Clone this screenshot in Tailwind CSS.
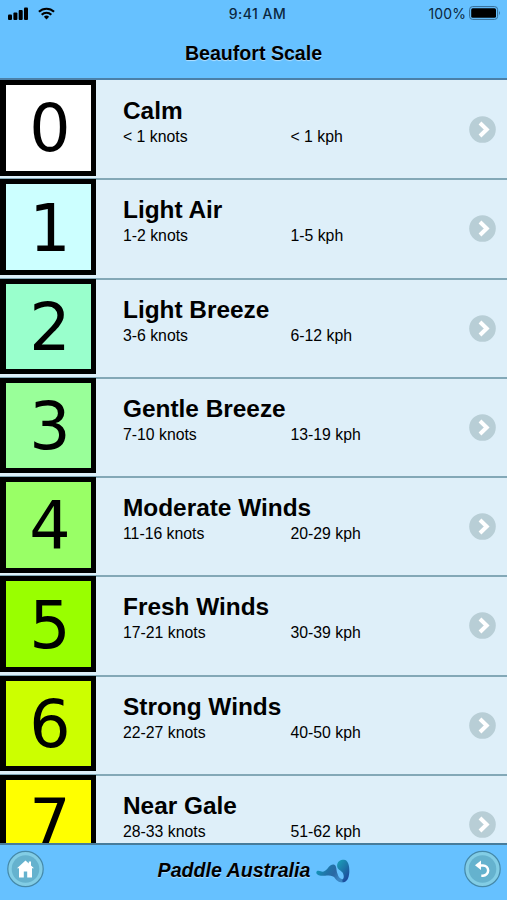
<!DOCTYPE html>
<html lang="en">
<head>
  <meta charset="UTF-8">
  <meta name="viewport" content="width=device-width, initial-scale=1.0">
  <title>Beaufort Scale</title>
  <script src="https://cdn.jsdelivr.net/npm/@tailwindcss/browser@4"></script>
</head>
<body class="bg-[#66c1ff] font-['Liberation_Sans',Arial,sans-serif] text-black">
  <div class="flex h-[900px] w-[507px] flex-col overflow-hidden">
    <header class="h-20 shrink-0 border-b-2 border-[#4b80a8]">
      <!-- Status bar -->
      <div class="grid h-[27px] grid-cols-3 items-center pr-[6px] pl-2 font-[Inter,sans-serif] text-[14px]">
        <div class="flex items-center gap-[10px]">
          <svg class="h-[13px] w-5" viewBox="0 0 20 13">
            <rect x="0" y="7.5" width="4" height="5.5" rx="1"/>
            <rect x="5.4" y="5.5" width="4" height="7.5" rx="1"/>
            <rect x="10.7" y="3" width="4" height="10" rx="1"/>
            <rect x="16" y="0.5" width="4" height="12.5" rx="1"/>
          </svg>
          <svg class="-mt-px h-[13px] w-[17px]" viewBox="0 0 18 13" fill="none" stroke="#000" stroke-width="2.3">
            <path d="M1 4.7a11.5 11.5 0 0 1 16 0"/>
            <path d="M3.9 7.8a7.3 7.3 0 0 1 10.2 0"/>
            <path d="M9 12.8 6.2 10a4 4 0 0 1 5.6 0Z" fill="#000" stroke="none"/>
          </svg>
        </div>
        <div class="pl-[6px] text-center text-[14px] font-medium tracking-[0.5px] whitespace-nowrap text-[#0b2740]">9:41 AM</div>
        <div class="flex items-center justify-end gap-[3px] text-[#0b2740]">
          <span class="tracking-[0.1px]">100%</span>
          <svg class="-mt-px h-[14px] w-8" viewBox="0 0 32 14">
            <rect x="0.6" y="0.6" width="28" height="12.8" rx="3" fill="none" stroke="#356c94" stroke-width="1"/>
            <rect x="2.2" y="2.2" width="24.8" height="9.6" rx="1.5" fill="#000"/>
            <path d="M30 4.8q1.8 2.2 0 4.4z" fill="#356c94"/>
          </svg>
        </div>
      </div>
      <h1 class="pt-[11px] text-center text-[19.6px] leading-[30px] font-bold [text-shadow:0_1px_1px_#ffffff80]">Beaufort Scale</h1>
    </header>

    <main id="scale" class="min-h-0 flex-1 overflow-hidden bg-[#deeff9]"></main>

    <footer class="flex h-[57px] shrink-0 items-start justify-between border-t-2 border-[#477c9b] pt-[5px] pr-[6px] pl-[7px]">
      <svg class="h-[38px] w-[38px]" viewBox="0 0 38 38">
        <circle cx="18.5" cy="19" r="17.7" fill="#82cde5" stroke="#4589a9" stroke-width="1.2"/>
        <circle cx="18.5" cy="19" r="13.8" fill="#65b2ce"/>
        <path d="M18.5 10.5 10 18.3h2v9.2h4.8v-6h3.4v6H25v-9.2h2l-3-2.8v-4h-2.2v2Z" fill="#fff"/>
      </svg>
      <div class="flex items-center pt-[7px]">
        <span class="text-[19.6px] leading-[26px] font-bold italic [text-shadow:0_1px_1px_#ffffff80]">Paddle Australia</span>
        <svg class="mt-[2px] ml-[6px] h-[24px] w-[34px]" viewBox="20 24 100 76" preserveAspectRatio="none">
          <defs>
            <linearGradient id="crest" x1="0" y1="0" x2="1" y2="0.4">
              <stop offset="0" stop-color="#0fa0bd"/>
              <stop offset="0.5" stop-color="#2173a8"/>
              <stop offset="0.75" stop-color="#2a68a4"/>
              <stop offset="1" stop-color="#3a86c4"/>
            </linearGradient>
            <linearGradient id="curl" x1="0" y1="0" x2="0.7" y2="1">
              <stop offset="0" stop-color="#1aa3ba"/>
              <stop offset="0.5" stop-color="#1c78aa"/>
              <stop offset="1" stop-color="#1c469b"/>
            </linearGradient>
          </defs>
          <path fill="url(#crest)" d="M21 68C20 61 27 60 34 63C41 66 48 62 54 54C60 45 67 40 74 42C81 45 79 58 83 70C86 82 91 87 99 88L99 98C86 99 79 91 73 81C67 76 60 76 52 76C40 79 23 77 21 68Z"/>
          <path fill="url(#curl)" d="M82 46C82 32 91 26 102 26C114 27 119 43 118 65C117 86 110 98 98 98L97 90C103 86 103 76 98 67C92 58 83 58 82 46Z"/>
        </svg>
      </div>
      <svg class="h-[38px] w-[38px]" viewBox="0 0 38 38">
        <circle cx="19.5" cy="19" r="17.7" fill="#82cde5" stroke="#4589a9" stroke-width="1.2"/>
        <circle cx="19.5" cy="19" r="13.8" fill="#65b2ce"/>
        <path d="M16 15.4h4a5.1 5.1 0 0 1 0 10.3h-1.7" fill="none" stroke="#fff" stroke-width="2.5"/>
        <path d="M18 10.5v9.5l-6-4.7Z" fill="#fff"/>
      </svg>
    </footer>
  </div>

  <script>
    const winds = [
      { force: 0, name: "Calm", knots: "&lt; 1 knots", kph: "&lt; 1 kph", color: "#ffffff" },
      { force: 1, name: "Light Air", knots: "1-2 knots", kph: "1-5 kph", color: "#ccffff" },
      { force: 2, name: "Light Breeze", knots: "3-6 knots", kph: "6-12 kph", color: "#99ffcc" },
      { force: 3, name: "Gentle Breeze", knots: "7-10 knots", kph: "13-19 kph", color: "#99ff99" },
      { force: 4, name: "Moderate Winds", knots: "11-16 knots", kph: "20-29 kph", color: "#99ff66" },
      { force: 5, name: "Fresh Winds", knots: "17-21 knots", kph: "30-39 kph", color: "#99ff00" },
      { force: 6, name: "Strong Winds", knots: "22-27 knots", kph: "40-50 kph", color: "#ccff00" },
      { force: 7, name: "Near Gale", knots: "28-33 knots", kph: "51-62 kph", color: "#ffff00" }
    ];

    // rows overlap by 1px so each badge covers the divider above it
    document.getElementById("scale").innerHTML = winds.map(w => `
      <div class="relative -mb-px flex h-[100.3px] items-start border-b-2 border-[#83a8b7]">
        <div class="flex h-[95.5px] w-24 shrink-0 items-center justify-center border-[5px] border-l-[6px] border-black font-['DejaVu_Sans',Verdana,sans-serif] text-[65px] leading-none" style="background:${w.color}">
          <span class="relative top-px left-[1.5px]">${w.force}</span>
        </div>
        <div class="flex-1 pt-4 pl-[27px]">
          <h2 class="text-[24.4px] leading-[29px] font-bold">${w.name}</h2>
          <div class="flex pt-px text-[15.8px] leading-[22px]">
            <span class="w-[167.5px]">${w.knots}</span>
            <span>${w.kph}</span>
          </div>
        </div>
        <svg class="mt-9 mr-[11px] h-[27px] w-[27px] shrink-0" viewBox="0 0 27 27">
          <circle cx="13.5" cy="13.5" r="13.3" fill="#b8ced6"/>
          <path d="m11 7 6.7 6.5-6.700 6.500" fill="none" stroke="#fff" stroke-width="4"/>
        </svg>
      </div>`).join("");
  </script>
</body>
</html>
